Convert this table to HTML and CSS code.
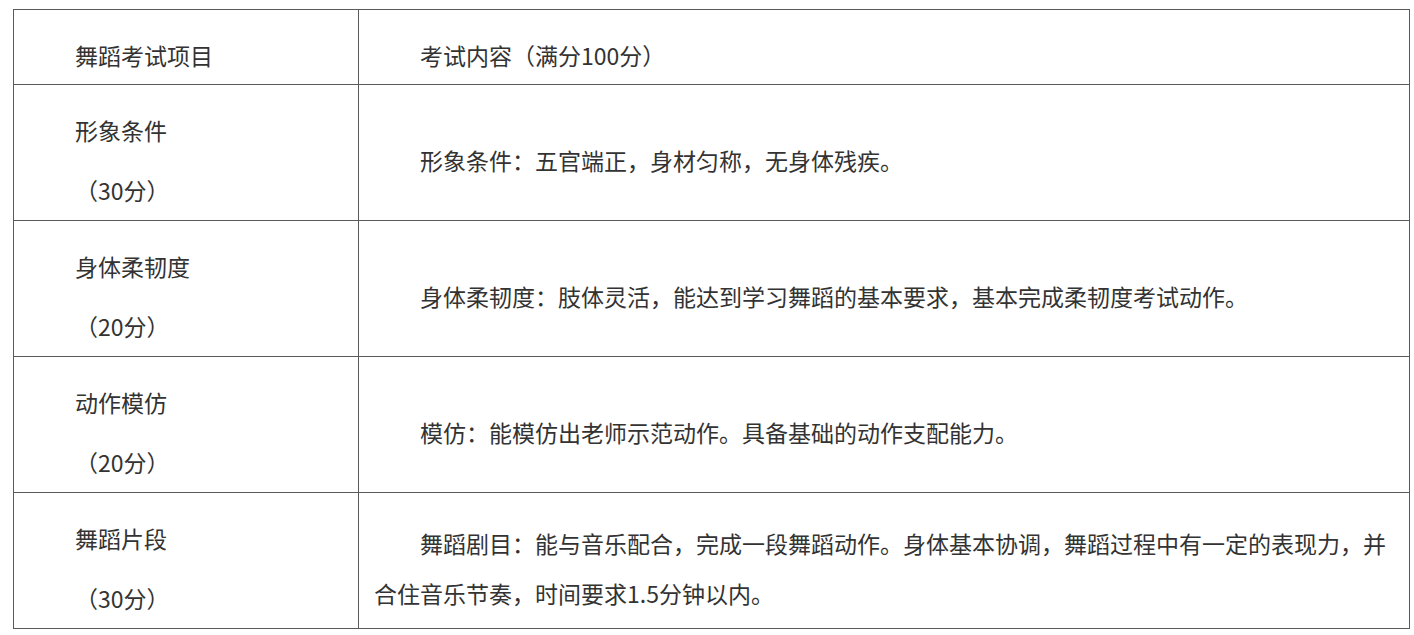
FILE: index.html
```html
<!DOCTYPE html>
<html lang="zh-CN">
<head>
<meta charset="utf-8">
<title>舞蹈考试项目</title>
<link rel="stylesheet" href="styles.css">
</head>
<body>
<table class="exam">
  <colgroup>
    <col class="col-item">
    <col class="col-content">
  </colgroup>
  <tr class="head-row">
    <td class="cell"><p class="para">舞蹈考试项目</p></td>
    <td class="cell"><p class="para">考试内容（满分100分）</p></td>
  </tr>
  <tr class="body-row">
    <td class="cell left"><p class="para">形象条件</p><p class="para">（30分）</p></td>
    <td class="cell right"><p class="para">形象条件：五官端正，身材匀称，无身体残疾。</p></td>
  </tr>
  <tr class="body-row">
    <td class="cell left"><p class="para">身体柔韧度</p><p class="para">（20分）</p></td>
    <td class="cell right"><p class="para">身体柔韧度：肢体灵活，能达到学习舞蹈的基本要求，基本完成柔韧度考试动作。</p></td>
  </tr>
  <tr class="body-row">
    <td class="cell left"><p class="para">动作模仿</p><p class="para">（20分）</p></td>
    <td class="cell right"><p class="para">模仿：能模仿出老师示范动作。具备基础的动作支配能力。</p></td>
  </tr>
  <tr class="body-row last-row">
    <td class="cell left"><p class="para">舞蹈片段</p><p class="para">（30分）</p></td>
    <td class="cell right"><p class="para">舞蹈剧目：能与音乐配合，完成一段舞蹈动作。身体基本协调，舞蹈过程中有一定的表现力，并合住音乐节奏，时间要求1.5分钟以内。</p></td>
  </tr>
</table>
</body>
</html>
```
FILE: styles.css
```css
html, body {
  margin: 0;
  padding: 0;
  background: #ffffff;
}

body {
  font-family: "Noto Sans CJK SC", "Noto Sans", sans-serif;
  color: #333333;
  font-size: 23px;
}

.exam {
  border-collapse: collapse;
  table-layout: fixed;
  width: 1396px;
  margin: 9px 0 0 13px;
}

.col-item {
  width: 345px;
}

.col-content {
  width: 1051px;
}

.cell {
  border: 1px solid #5a5a5a;
  padding: 15px 15px 0 15px;
  vertical-align: middle;
  box-sizing: border-box;
}

.head-row {
  height: 75px;
}

.body-row {
  height: 136px;
}

.last-row {
  height: 135px;
}

.para {
  margin: 0;
  text-indent: 46px;
  line-height: 50px;
}

.left .para {
  line-height: 60px;
}
```
